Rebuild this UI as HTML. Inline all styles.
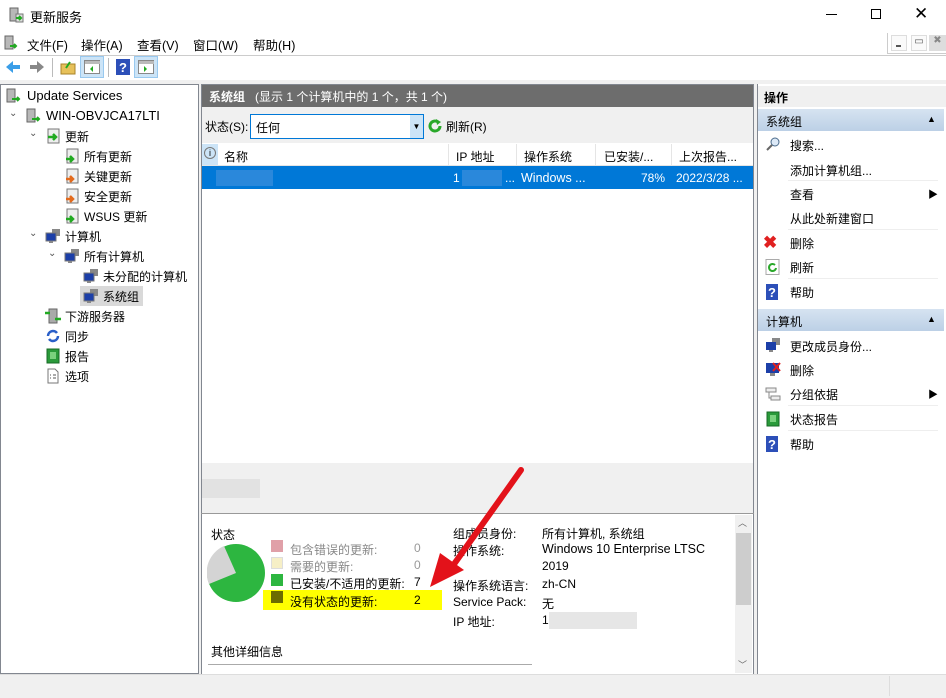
<!DOCTYPE html>
<html><head><meta charset="utf-8"><style>
*{box-sizing:border-box;margin:0;padding:0}
body{width:946px;height:698px;position:relative;background:#f0f0f0;font-family:"Liberation Sans","Noto Sans CJK SC",sans-serif;font-size:12px;color:#000;overflow:hidden}
.a{position:absolute;white-space:nowrap}
.ic{position:absolute;width:16px;height:16px}
</style></head><body>
<!-- title -->
<div class="a" style="left:0;top:0;width:946px;height:30px;background:#fff"></div>
<svg class="ic" style="left:8px;top:7px" viewBox="0 0 16 16"><rect x="2" y="1" width="8" height="13" fill="#b8b8b8" stroke="#666"/><rect x="8" y="7" width="7" height="8" fill="#ddd" stroke="#777"/><path d="M8 11h5M11 9l2 2-2 2" stroke="#2a2" stroke-width="2" fill="none"/></svg>
<div class="a" style="left:30px;top:7px;font-size:13px">更新服务</div>
<div class="a" style="left:826px;top:14px;width:11px;height:1px;background:#000"></div>
<div class="a" style="left:871px;top:9px;width:10px;height:10px;border:1px solid #000"></div>
<div class="a" style="left:914px;top:4px;font-size:17px">✕</div>
<!-- menu -->
<div class="a" style="left:0;top:30px;width:946px;height:25px;background:#fff"></div>
<svg class="ic" style="left:3px;top:35px" viewBox="0 0 16 16"><rect x="2" y="1" width="8" height="13" fill="#b8b8b8" stroke="#666"/><path d="M7 11h6M11 9l2 2-2 2" stroke="#2a2" stroke-width="2" fill="none"/></svg>
<div class="a" style="left:27px;top:35px;font-size:12.5px;word-spacing:0">文件(F)</div>
<div class="a" style="left:81px;top:35px;font-size:12.5px">操作(A)</div>
<div class="a" style="left:137px;top:35px;font-size:12.5px">查看(V)</div>
<div class="a" style="left:193px;top:35px;font-size:12.5px">窗口(W)</div>
<div class="a" style="left:253px;top:35px;font-size:12.5px">帮助(H)</div>
<div class="a" style="left:887px;top:33px;width:59px;height:21px;border-left:1px solid #ccc;border-bottom:1px solid #ccc"></div>
<div class="a" style="left:891px;top:35px;width:16px;height:16px;border:1px solid #ddd;background:#fafafa"></div>
<div class="a" style="left:896px;top:45px;width:5px;height:2px;background:#555"></div>
<div class="a" style="left:911px;top:35px;width:16px;height:16px;border:1px solid #ddd;background:#fafafa;font-size:10px;text-align:center;color:#555">▭</div>
<div class="a" style="left:929px;top:35px;width:17px;height:16px;background:#ddd;font-size:10px;text-align:center;color:#888">✖</div>
<!-- toolbar -->
<div class="a" style="left:0;top:55px;width:946px;height:25px;background:#fff;border-top:1px solid #ccc"></div>
<svg class="a" style="left:5px;top:59px" width="44" height="16"><path d="M1 8l7-6v4h7v4H8v4z" fill="#3a9ee8"/><path d="M39 8l-7-6v4h-7v4h7v4z" fill="#888"/></svg>
<div class="a" style="left:52px;top:58px;width:1px;height:19px;background:#bbb"></div>
<svg class="ic" style="left:60px;top:59px" viewBox="0 0 16 16"><rect x="1" y="5" width="14" height="10" fill="#e7c15a" stroke="#a8842a"/><path d="M6 9l4-6" stroke="#2a2" stroke-width="2"/></svg>
<div class="a" style="left:80px;top:56px;width:24px;height:22px;background:#cce4f7;border:1px solid #99c9ef"></div>
<svg class="ic" style="left:84px;top:59px" viewBox="0 0 16 16"><rect x="0.5" y="1.5" width="15" height="13" fill="#fff" stroke="#888"/><rect x="1" y="2" width="15" height="3" fill="#bbb"/><path d="M9 7l-3 3 3 3z" fill="#2a2"/></svg>
<div class="a" style="left:108px;top:58px;width:1px;height:19px;background:#bbb"></div>
<svg class="ic" style="left:115px;top:59px" viewBox="0 0 16 16"><rect x="1" y="0" width="14" height="16" fill="#2c4fb8"/><text x="4" y="13" fill="#fff" font-size="13" font-weight="bold" font-family="Liberation Sans">?</text></svg>
<div class="a" style="left:134px;top:56px;width:24px;height:22px;background:#cce4f7;border:1px solid #99c9ef"></div>
<svg class="ic" style="left:138px;top:59px" viewBox="0 0 16 16"><rect x="0.5" y="1.5" width="15" height="13" fill="#fff" stroke="#888"/><rect x="1" y="2" width="15" height="3" fill="#bbb"/><path d="M6 7l3 3-3 3z" fill="#2a2"/></svg>
<!-- left tree -->
<div class="a" style="left:0;top:84px;width:199px;height:590px;background:#fff;border:1px solid #828790"></div>
<svg class="ic" style="left:6px;top:88px" viewBox="0 0 16 16"><rect x="1" y="1" width="8" height="13" fill="#b8b8b8" stroke="#666"/><path d="M6 11h7M11 9l2 2-2 2" stroke="#2a2" stroke-width="2" fill="none"/></svg>
<div class="a" style="left:27px;top:88px;font-size:13px">Update Services</div>
<div class="a" style="left:9px;top:108px;font-size:10px;color:#555">⌄</div>
<svg class="ic" style="left:26px;top:108px" viewBox="0 0 16 16"><rect x="1" y="1" width="8" height="13" fill="#b8b8b8" stroke="#666"/><path d="M6 11h7M11 9l2 2-2 2" stroke="#2a2" stroke-width="2" fill="none"/></svg>
<div class="a" style="left:46px;top:108px;font-size:13px">WIN-OBVJCA17LTI</div>
<div class="a" style="left:29px;top:128px;font-size:10px;color:#555">⌄</div>
<svg class="ic" style="left:45px;top:128px" viewBox="0 0 16 16"><rect x="3" y="1" width="11" height="14" fill="#eee" stroke="#777"/><path d="M3 9h7M8 6l3 3-3 3" stroke="#2a2" stroke-width="2.5" fill="none"/></svg>
<div class="a" style="left:65px;top:128px">更新</div>
<svg class="ic" style="left:64px;top:148px" viewBox="0 0 16 16"><rect x="3" y="1" width="11" height="14" fill="#eee" stroke="#777"/><path d="M2 11h6M6 8l3 3-3 3" stroke="#2a2" stroke-width="2.5" fill="none"/></svg>
<div class="a" style="left:84px;top:148px">所有更新</div>
<svg class="ic" style="left:64px;top:168px" viewBox="0 0 16 16"><rect x="3" y="1" width="11" height="14" fill="#eee" stroke="#777"/><path d="M2 11h6M6 8l3 3-3 3" stroke="#e36a1c" stroke-width="2.5" fill="none"/></svg>
<div class="a" style="left:84px;top:168px">关键更新</div>
<svg class="ic" style="left:64px;top:188px" viewBox="0 0 16 16"><rect x="3" y="1" width="11" height="14" fill="#eee" stroke="#777"/><path d="M2 11h6M6 8l3 3-3 3" stroke="#e36a1c" stroke-width="2.5" fill="none"/></svg>
<div class="a" style="left:84px;top:188px">安全更新</div>
<svg class="ic" style="left:64px;top:208px" viewBox="0 0 16 16"><rect x="3" y="1" width="11" height="14" fill="#eee" stroke="#777"/><path d="M2 11h6M6 8l3 3-3 3" stroke="#2a2" stroke-width="2.5" fill="none"/></svg>
<div class="a" style="left:84px;top:208px">WSUS 更新</div>
<div class="a" style="left:29px;top:228px;font-size:10px;color:#555">⌄</div>
<svg class="ic" style="left:45px;top:228px" viewBox="0 0 16 16"><rect x="7" y="1" width="8" height="7" fill="#888"/><rect x="1" y="5" width="10" height="8" fill="#1c3fa8" stroke="#777"/><rect x="4" y="13" width="4" height="2" fill="#888"/></svg>
<div class="a" style="left:65px;top:228px">计算机</div>
<div class="a" style="left:48px;top:248px;font-size:10px;color:#555">⌄</div>
<svg class="ic" style="left:64px;top:248px" viewBox="0 0 16 16"><rect x="7" y="1" width="8" height="7" fill="#888"/><rect x="1" y="5" width="10" height="8" fill="#1c3fa8" stroke="#777"/><rect x="4" y="13" width="4" height="2" fill="#888"/></svg>
<div class="a" style="left:84px;top:248px">所有计算机</div>
<svg class="ic" style="left:83px;top:268px" viewBox="0 0 16 16"><rect x="7" y="1" width="8" height="7" fill="#888"/><rect x="1" y="5" width="10" height="8" fill="#1c3fa8" stroke="#777"/><rect x="4" y="13" width="4" height="2" fill="#888"/></svg>
<div class="a" style="left:103px;top:268px">未分配的计算机</div>
<div class="a" style="left:80px;top:286px;width:63px;height:20px;background:#d9d9d9"></div>
<svg class="ic" style="left:83px;top:288px" viewBox="0 0 16 16"><rect x="7" y="1" width="8" height="7" fill="#888"/><rect x="1" y="5" width="10" height="8" fill="#1c3fa8" stroke="#777"/><rect x="4" y="13" width="4" height="2" fill="#888"/></svg>
<div class="a" style="left:103px;top:288px">系统组</div>
<svg class="ic" style="left:45px;top:308px" viewBox="0 0 16 16"><rect x="4" y="1" width="8" height="14" fill="#aaa" stroke="#666"/><path d="M0 5h5M10 11h6" stroke="#2a2" stroke-width="2.5"/></svg>
<div class="a" style="left:65px;top:308px">下游服务器</div>
<svg class="ic" style="left:45px;top:328px" viewBox="0 0 16 16"><path d="M3 8a5 5 0 0 1 9-3M13 8a5 5 0 0 1-9 3" stroke="#2a5fc8" stroke-width="2.5" fill="none"/></svg>
<div class="a" style="left:65px;top:328px">同步</div>
<svg class="ic" style="left:45px;top:348px" viewBox="0 0 16 16"><rect x="2" y="1" width="12" height="14" fill="#2a9a3a" stroke="#176b25"/><rect x="5" y="4" width="6" height="7" fill="#7ad17e"/></svg>
<div class="a" style="left:65px;top:348px">报告</div>
<svg class="ic" style="left:45px;top:368px" viewBox="0 0 16 16"><path d="M3 1h7l3 3v11H3z" fill="#fff" stroke="#777"/><path d="M5 7h1M8 7h3M5 10h1M8 10h3" stroke="#555"/></svg>
<div class="a" style="left:65px;top:368px">选项</div>
<!-- middle -->
<div class="a" style="left:201px;top:84px;width:553px;height:590px;background:#f0f0f0;border:1px solid #828790"></div>
<div class="a" style="left:202px;top:85px;width:551px;height:22px;background:#6d6d6d;color:#fff;padding:3px 7px"><b>系统组</b>&nbsp;&nbsp;&nbsp;(显示 1 个计算机中的 1 个，共 1 个)</div>
<div class="a" style="left:205px;top:118px">状态(S):</div>
<div class="a" style="left:250px;top:114px;width:174px;height:25px;background:#fff;border:1px solid #0078d7;padding:4px 5px">任何</div>
<div class="a" style="left:410px;top:115px;width:13px;height:23px;background:#cce4f7;font-size:8px;text-align:center;padding-top:7px">▼</div>
<svg class="ic" style="left:427px;top:118px" viewBox="0 0 16 16"><path d="M13 8a5 5 0 1 1-2-4" stroke="#2aa82a" stroke-width="3" fill="none"/><path d="M9 1l5 3-4 3z" fill="#2aa82a"/></svg>
<div class="a" style="left:446px;top:118px">刷新(R)</div>
<div class="a" style="left:202px;top:143px;width:551px;height:320px;background:#fff"></div>
<div class="a" style="left:202px;top:143px;width:551px;height:23px;border-bottom:1px solid #e5e5e5"></div>
<div class="a" style="left:202px;top:144px;width:16px;height:21px;background:#cce4f7"></div>
<div class="a" style="left:204px;top:147px;width:12px;height:12px;border:1px solid #777;border-radius:50%;font-size:9px;text-align:center;line-height:10px">i</div>
<div class="a" style="left:224px;top:148px">名称</div>
<div class="a" style="left:448px;top:144px;width:1px;height:21px;background:#e5e5e5"></div>
<div class="a" style="left:456px;top:148px">IP 地址</div>
<div class="a" style="left:516px;top:144px;width:1px;height:21px;background:#e5e5e5"></div>
<div class="a" style="left:524px;top:148px">操作系统</div>
<div class="a" style="left:595px;top:144px;width:1px;height:21px;background:#e5e5e5"></div>
<div class="a" style="left:604px;top:148px">已安装/...</div>
<div class="a" style="left:671px;top:144px;width:1px;height:21px;background:#e5e5e5"></div>
<div class="a" style="left:679px;top:148px">上次报告...</div>
<div class="a" style="left:202px;top:166px;width:551px;height:23px;background:#0078d7;color:#fff"></div>
<div class="a" style="left:216px;top:170px;width:57px;height:16px;background:#2a88db"></div>
<div class="a" style="left:453px;top:171px;color:#fff">1</div>
<div class="a" style="left:462px;top:170px;width:40px;height:16px;background:#2a88db"></div>
<div class="a" style="left:505px;top:171px;color:#fff">...</div>
<div class="a" style="left:521px;top:171px;color:#fff;font-size:12.5px">Windows ...</div>
<div class="a" style="left:641px;top:171px;color:#fff">78%</div>
<div class="a" style="left:676px;top:171px;color:#fff">2022/3/28 ...</div>
<div class="a" style="left:202px;top:479px;width:58px;height:19px;background:#e2e2e2"></div>
<div class="a" style="left:201px;top:513px;width:553px;height:1px;background:#999"></div>
<div class="a" style="left:202px;top:514px;width:551px;height:160px;background:#fff"></div>
<div class="a" style="left:735px;top:515px;width:17px;height:158px;background:#f0f0f0"></div>
<div class="a" style="left:736px;top:533px;width:15px;height:72px;background:#cdcdcd"></div>
<div class="a" style="left:738px;top:516px;font-size:9px;color:#666">︿</div>
<div class="a" style="left:738px;top:658px;font-size:9px;color:#666">﹀</div>
<div class="a" style="left:211px;top:526px">状态</div>
<svg class="a" style="left:207px;top:543px" width="60" height="60"><circle cx="29" cy="30" r="29" fill="#2db640"/><path d="M29 30L17 3A29 29 0 0 0 2 41Z" fill="#d4d4d4"/></svg>
<div class="a" style="left:263px;top:590px;width:179px;height:20px;background:#ffff00"></div>
<div class="a" style="left:271px;top:540px;width:12px;height:12px;background:#e0a0a8"></div>
<div class="a" style="left:290px;top:541px;color:#888">包含错误的更新:</div><div class="a" style="left:414px;top:541px;color:#999">0</div>
<div class="a" style="left:271px;top:557px;width:12px;height:12px;background:#f6efc6;border:1px solid #ddd"></div>
<div class="a" style="left:290px;top:558px;color:#888">需要的更新:</div><div class="a" style="left:414px;top:558px;color:#999">0</div>
<div class="a" style="left:271px;top:574px;width:12px;height:12px;background:#2db640"></div>
<div class="a" style="left:290px;top:575px">已安装/不适用的更新:</div><div class="a" style="left:414px;top:575px">7</div>
<div class="a" style="left:271px;top:591px;width:12px;height:12px;background:#6b6b00"></div>
<div class="a" style="left:290px;top:593px">没有状态的更新:</div><div class="a" style="left:414px;top:593px">2</div>
<div class="a" style="left:453px;top:525px">组成员身份:</div><div class="a" style="left:542px;top:525px">所有计算机, 系统组</div>
<div class="a" style="left:453px;top:542px">操作系统:</div><div class="a" style="left:542px;top:542px;font-size:12.5px">Windows 10 Enterprise LTSC</div>
<div class="a" style="left:542px;top:559px">2019</div>
<div class="a" style="left:453px;top:577px">操作系统语言:</div><div class="a" style="left:542px;top:577px">zh-CN</div>
<div class="a" style="left:453px;top:595px">Service Pack:</div><div class="a" style="left:542px;top:595px">无</div>
<div class="a" style="left:453px;top:613px">IP 地址:</div><div class="a" style="left:542px;top:613px">1</div>
<div class="a" style="left:549px;top:612px;width:88px;height:17px;background:#e6e6e6"></div>
<div class="a" style="left:211px;top:643px">其他详细信息</div>
<div class="a" style="left:208px;top:664px;width:324px;height:1px;background:#aaa"></div>
<svg class="a" style="left:420px;top:460px" width="110" height="135"><path d="M101 10L32 107" stroke="#e3121a" stroke-width="6" stroke-linecap="round"/><path d="M10 127L20 93 44 110Z" fill="#e3121a"/></svg>
<!-- right -->
<div class="a" style="left:757px;top:84px;width:189px;height:590px;background:#fff;border-left:1px solid #828790"></div>
<div class="a" style="left:758px;top:86px;width:188px;height:21px;background:#f0f0f0;padding:3px 6px;font-weight:bold">操作</div>
<div class="a" style="left:758px;top:109px;width:186px;height:22px;background:linear-gradient(#d6e3f1,#bcd0e6);padding:4px 8px">系统组</div>
<div class="a" style="left:927px;top:114px;font-size:9px">▲</div>
<div class="a" style="left:758px;top:309px;width:186px;height:22px;background:linear-gradient(#d6e3f1,#bcd0e6);padding:4px 8px">计算机</div>
<div class="a" style="left:927px;top:314px;font-size:9px">▲</div>
<svg class="ic" style="left:765px;top:136px" viewBox="0 0 16 16"><circle cx="10" cy="6" r="4" fill="#dce9f7" stroke="#4a6a8a"/><path d="M7 9l-5 5" stroke="#666" stroke-width="2"/></svg>
<div class="a" style="left:790px;top:137px">搜索...</div>
<div class="a" style="left:790px;top:162px">添加计算机组...</div>
<div class="a" style="left:790px;top:186px">查看</div><div class="a" style="left:928px;top:186px;font-size:10px">▶</div>
<div class="a" style="left:790px;top:210px">从此处新建窗口</div>
<div class="a" style="left:763px;top:233px;font-size:17px;color:#e02020;font-weight:bold">✖</div>
<div class="a" style="left:790px;top:235px">删除</div>
<svg class="ic" style="left:765px;top:259px" viewBox="0 0 16 16"><rect x="1" y="0.5" width="13" height="15" fill="#fff" stroke="#aaa"/><path d="M11 9a3.5 3.5 0 1 1-1-3" stroke="#2aa82a" stroke-width="2" fill="none"/></svg>
<div class="a" style="left:790px;top:259px">刷新</div>
<svg class="ic" style="left:765px;top:284px" viewBox="0 0 16 16"><rect x="1" y="0" width="12" height="16" fill="#2c4fb8"/><text x="3" y="13" fill="#fff" font-size="13" font-weight="bold" font-family="Liberation Sans">?</text></svg>
<div class="a" style="left:790px;top:284px">帮助</div>
<svg class="ic" style="left:765px;top:337px" viewBox="0 0 16 16"><rect x="7" y="1" width="8" height="7" fill="#888"/><rect x="1" y="5" width="10" height="8" fill="#1c3fa8"/><rect x="4" y="13" width="4" height="2" fill="#888"/></svg>
<div class="a" style="left:790px;top:338px">更改成员身份...</div>
<svg class="ic" style="left:765px;top:361px" viewBox="0 0 16 16"><rect x="1" y="2" width="13" height="10" fill="#1c3fa8"/><rect x="5" y="12" width="5" height="3" fill="#888"/><path d="M8 2l7 8M15 2l-7 8" stroke="#e02020" stroke-width="2"/></svg>
<div class="a" style="left:790px;top:362px">删除</div>
<svg class="ic" style="left:765px;top:386px" viewBox="0 0 16 16"><rect x="1" y="2" width="10" height="4" fill="#eee" stroke="#888"/><rect x="6" y="10" width="9" height="4" fill="#eee" stroke="#888"/><path d="M4 6v6h2" stroke="#888" fill="none"/></svg>
<div class="a" style="left:790px;top:386px">分组依据</div><div class="a" style="left:928px;top:386px;font-size:10px">▶</div>
<svg class="ic" style="left:765px;top:411px" viewBox="0 0 16 16"><rect x="2" y="1" width="12" height="14" fill="#2a9a3a" stroke="#176b25"/><rect x="5" y="4" width="6" height="7" fill="#7ad17e"/></svg>
<div class="a" style="left:790px;top:411px">状态报告</div>
<svg class="ic" style="left:765px;top:436px" viewBox="0 0 16 16"><rect x="1" y="0" width="12" height="16" fill="#2c4fb8"/><text x="3" y="13" fill="#fff" font-size="13" font-weight="bold" font-family="Liberation Sans">?</text></svg>
<div class="a" style="left:790px;top:436px">帮助</div>
<div class="a" style="left:788px;top:180px;width:150px;height:1px;background:#eee"></div>
<div class="a" style="left:788px;top:229px;width:150px;height:1px;background:#eee"></div>
<div class="a" style="left:788px;top:278px;width:150px;height:1px;background:#eee"></div>
<div class="a" style="left:788px;top:405px;width:150px;height:1px;background:#eee"></div>
<div class="a" style="left:788px;top:430px;width:150px;height:1px;background:#eee"></div>
<!-- status bar -->
<div class="a" style="left:0;top:674px;width:946px;height:24px;background:#f0f0f0;border-top:1px solid #ddd"></div>
<div class="a" style="left:889px;top:676px;width:1px;height:20px;background:#ddd"></div>
</body></html>
